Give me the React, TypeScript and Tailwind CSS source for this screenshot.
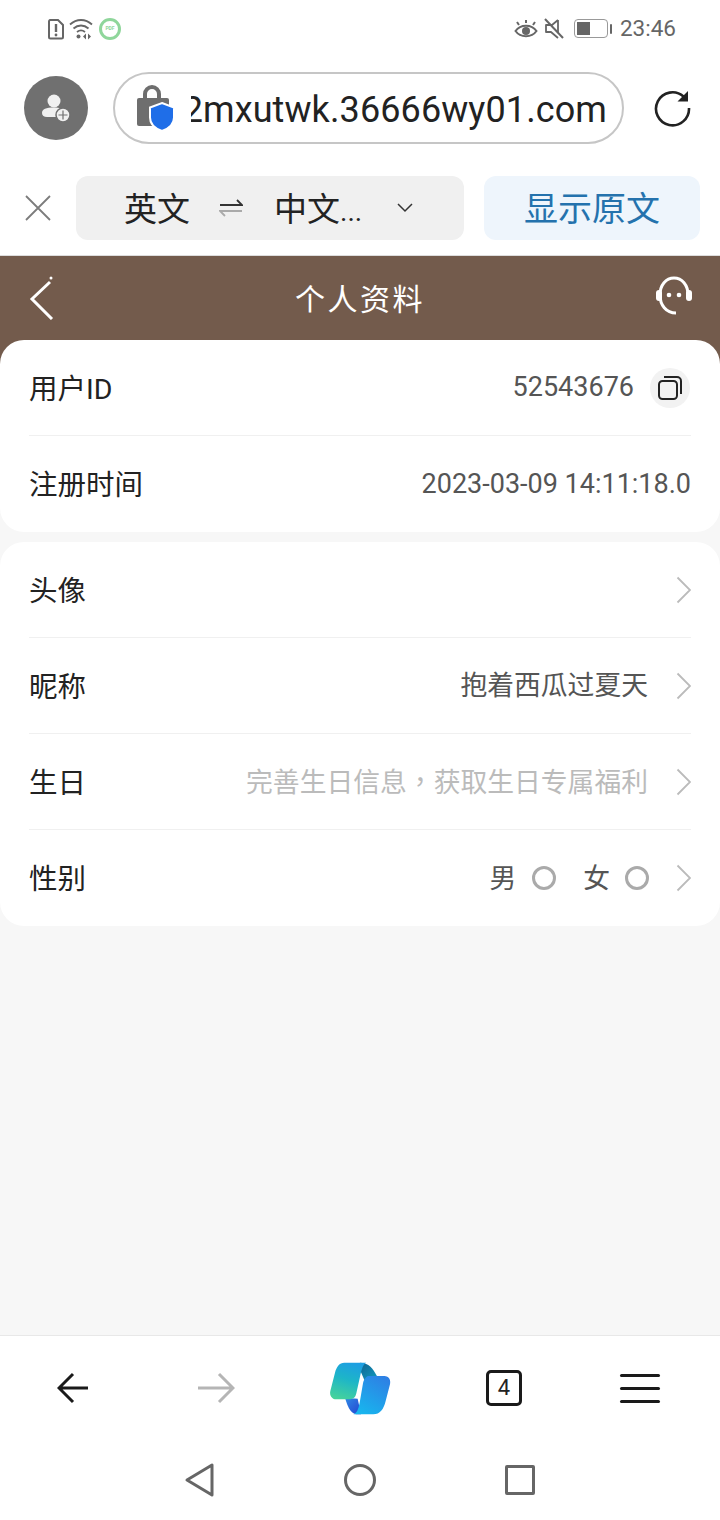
const font = { sans: "font-['Roboto','Noto_Sans_CJK_SC',sans-serif]" }

function StatusBar() {
    return (
        <div className="flex h-[60px] items-center justify-between pl-[47px] pr-[44px] text-[#666]">
            <div className="flex items-center gap-[5px] -mt-[3px]">
                {/* sim alert */}
                <svg width="18" height="22" viewBox="0 0 18 22" fill="none">
                    <path d="M3 2h8l5 5v12a1.500 1.500 0 0 1-1.500 1.500h-11A1.500 1.500 0 0 1 2 19V3.500A1.500 1.500 0 0 1 3 2z" stroke="#666" strokeWidth="2" />
                    <path d="M9 6v8" stroke="#666" strokeWidth="2.400" />
                    <circle cx="9" cy="17" r="1.400" fill="#666" />
                </svg>
                {/* wifi */}
                <svg width="25" height="22" viewBox="0 0 25 22" fill="none" className="-ml-[1px]">
                    <path d="M1 6.500c6.500-6 15.500-6 22 0M4.500 10.500c4.500-4 10.500-4 15 0M8 14c2.500-2 5.500-2 8 0" stroke="#666" strokeWidth="1.800" />
                    <circle cx="9.500" cy="18.500" r="2" fill="#666" />
                    <path d="M17 15.500l-3 3 3 3zM19 15.500l3 3-3 3z" fill="#666" />
                </svg>
                {/* green chat badge */}
                <div className="flex h-[22px] w-[22px] items-center justify-center rounded-full border-[3px] border-[#8fd69b] bg-white">
                    <span className="font-['Roboto',sans-serif] text-[5px] font-bold leading-none text-[#8fd69b]">PDF</span>
                </div>
            </div>
            <div className="flex items-center -mt-[3px]">
                {/* eye */}
                <svg width="24" height="22" viewBox="0 0 24 22" fill="none" className="mr-[6px]">
                    <path d="M1.500 13c5-7 16-7 21 0-5 7-16 7-21 0z" stroke="#666" strokeWidth="2" />
                    <circle cx="12" cy="13" r="4" fill="#666" />
                    <path d="M5 7L3 4M12 5V2M19 7l2-3" stroke="#666" strokeWidth="2" />
                </svg>
                {/* muted speaker */}
                <svg width="20" height="22" viewBox="0 0 20 22" fill="none" className="mr-[10px]">
                    <path d="M14 2v13M14 2L8 7H2v7h5l7 6" stroke="#666" strokeWidth="1.800" strokeLinejoin="round" />
                    <path d="M1 1l18 19" stroke="#666" strokeWidth="2" />
                </svg>
                {/* battery */}
                <div className="flex h-[19px] w-[34px] items-center rounded-[4px] border border-[#999] pl-[2px]">
                    <div className="h-[13px] w-[13px] bg-[#666]" />
                </div>
                <div className="ml-[2px] h-[10px] w-[2px] rounded-sm bg-[#666]" />
                <span className={`${font.sans} ml-[8px] text-[22.500px] leading-none`}>23:46</span>
            </div>
        </div>
    )
}

function AddressBar() {
    return (
        <div className="flex h-[96px] items-center pl-[24px]">
            <div className="flex h-[64px] w-[64px] items-center justify-center rounded-full bg-[#707070]">
                <svg width="32" height="32" viewBox="0 0 32 32" fill="none">
                    <circle cx="14" cy="9" r="6.500" fill="#f0f0f0" />
                    <path d="M2 21c0-4 4-5.500 12-5.500 3 0 5 .2 6.500 1-2.500 1.500-4 4-3.500 8.500H7c-3 0-5-1.500-5-4z" fill="#f0f0f0" />
                    <circle cx="23" cy="23" r="7" fill="#f0f0f0" stroke="#707070" strokeWidth="1.500" />
                    <path d="M23 18.500v9M18.500 23h9" stroke="#707070" strokeWidth="1.200" />
                </svg>
            </div>
            <div className="ml-[25px] flex h-[72px] w-[511px] items-center rounded-full border-2 border-[#c6c6c6] pl-[21px] pr-[15px]">
                <svg width="38" height="46" viewBox="0 0 38 46" fill="none" className="shrink-0">
                    <path d="M9 14V9a7 7 0 0 1 14 0v5" stroke="#6e6e6e" strokeWidth="4" />
                    <rect x="1" y="13" width="32" height="28" rx="2" fill="#6e6e6e" />
                    <path d="M26 18l12 4.500v10c0 7-5 11-12 13.500-7-2.500-12-6.500-12-13.500v-10z" fill="#1f6ee8" stroke="#fff" strokeWidth="2" />
                </svg>
                {/* long hosts scroll under the lock, so only the tail stays visible */}
                <div className="ml-[17px] flex min-w-0 flex-1 justify-end overflow-hidden">
                    <span className="whitespace-nowrap pt-[4px] font-['Roboto',sans-serif] text-[36px] leading-[44px] tracking-[0.1px] text-[#222]">
                        2mxutwk.36666wy01.com
                    </span>
                </div>
            </div>
            {/* reload */}
            <svg width="40" height="40" viewBox="0 0 40 40" fill="none" className="ml-[29px]">
                <path d="M30.500 8.500A16.500 16.500 0 1 0 36 20" stroke="#222" strokeWidth="2.600" />
                <path d="M35 3v10.500H24.500z" fill="#222" />
            </svg>
        </div>
    )
}

function TranslateBar() {
    return (
        <div className={`${font.sans} flex h-[100px] items-center border-b border-[#ddd] pl-[25px] pr-[20px] pt-[4px]`}>
            <svg width="26" height="26" viewBox="0 0 26 26" fill="none">
                <path d="M1 1l24 24M25 1L1 25" stroke="#7c7c7c" strokeWidth="1.800" />
            </svg>
            <div className="ml-[25px] flex h-[64px] w-[388px] items-center rounded-[12px] bg-[#f0f0f0] text-[33px] text-[#222]">
                <span className="ml-[48px] pt-[4px]">英文</span>
                <svg width="24" height="20" viewBox="0 0 24 20" fill="none" className="ml-[29px]">
                    <path d="M1 7h22L18 2" stroke="#333" strokeWidth="1.800" />
                    <path d="M23 13H1l5 5" stroke="#aaa" strokeWidth="1.800" />
                </svg>
                <span className="ml-[31px] pt-[4px]">
                    中文<span className="text-[28px]">...</span>
                </span>
                <svg width="16" height="10" viewBox="0 0 16 10" fill="none" className="ml-[35px]">
                    <path d="M1 1l7 7 7-7" stroke="#333" strokeWidth="1.500" />
                </svg>
            </div>
            <div className="ml-[20px] flex h-[64px] w-[216px] items-center justify-center rounded-[12px] bg-[#eef5fc] pt-[4px] text-[34px] text-[#2472ad]">
                显示原文
            </div>
        </div>
    )
}

function Row({ label, last, children }: { label: string; last?: boolean; children?: React.ReactNode }) {
    return (
        <div className={`mx-[29px] flex h-[96px] items-center justify-between ${last ? '' : 'border-b border-[#f0f0f0]'}`}>
            <span className="pt-[5px] text-[28.500px] text-[#222]">{label}</span>
            <div className="flex items-center">{children}</div>
        </div>
    )
}

function Chevron() {
    return (
        <svg width="15" height="28" viewBox="0 0 15 28" fill="none" className="ml-[28px]">
            <path d="M1.500 1.500L14 14 1.500 26.500" stroke="#bbb" strokeWidth="1.800" />
        </svg>
    )
}

// two folded ribbons with a white slit between them
function CopilotLogo() {
    return (
        <svg width="70" height="65" viewBox="0 0 210 195" fill="none">
            <defs>
                <linearGradient id="wingLeft" x1="0.3" y1="1" x2="0.6" y2="0">
                    <stop offset="0" stopColor="#45d29c" />
                    <stop offset="0.550" stopColor="#1db5c8" />
                    <stop offset="1" stopColor="#1d9fe2" />
                </linearGradient>
                <linearGradient id="wingRight" x1="0.2" y1="1" x2="0.8" y2="0">
                    <stop offset="0" stopColor="#17b7ee" />
                    <stop offset="1" stopColor="#2e80e4" />
                </linearGradient>
                <linearGradient id="foldTop" x1="0" y1="0" x2="1" y2="1">
                    <stop offset="0" stopColor="#0e5f8e" />
                    <stop offset="1" stopColor="#139cc0" />
                </linearGradient>
                <linearGradient id="foldBottom" x1="0" y1="0" x2="1" y2="1">
                    <stop offset="0" stopColor="#2f8ae6" />
                    <stop offset="1" stopColor="#2444d0" />
                </linearGradient>
            </defs>
            <path d="M105 20c20 0 35 10 45 30l8 14-40 8-18-42z" fill="url(#foldTop)" />
            <path d="M60 125l38 3 10 47h-8c-20 0-30-15-40-50z" fill="url(#foldBottom)" />
            <path d="M58 20h66c-10 4-14 20-18 38l-12 54c-3 14-10 18-24 18H34c-14 0-21-12-18-25l14-55c5-18 13-30 28-30z" fill="url(#wingLeft)" />
            <path d="M130 60h48c14 0 20 12 17 25l-13 50c-6 25-17 40-37 40H84c12-3 16-15 20-35l10-58c2-10 8-20 16-22z" fill="url(#wingRight)" />
        </svg>
    )
}

export default function App() {
    return (
        <div className={`${font.sans} flex h-[1520px] w-[720px] flex-col overflow-hidden bg-[#f7f7f7]`}>
            <div className="bg-white">
                <StatusBar />
                <AddressBar />
                <TranslateBar />
            </div>

            {/* page header, runs on behind the rounded card corners */}
            <div className="flex h-[108px] items-start justify-between bg-[#735b4c] pl-[29px] pr-[27px] pt-[20px]">
                <div className="w-[36px]">
                    <svg width="28" height="44" viewBox="0 0 28 44" fill="none">
                        <path d="M21 6L3 23l20 20" stroke="#fff" strokeWidth="3" />
                        <circle cx="22" cy="2" r="1.500" fill="#fff" />
                    </svg>
                </div>
                <span className="mt-[2px] text-[30px] leading-[44px] tracking-[2.500px] text-white">个人资料</span>
                <svg width="38" height="40" viewBox="0 0 38 40" fill="none">
                    <path d="M5 19C5 9 11 2 19 2s14 7 14 17M5 19c0 10 6 18 16 18" stroke="#fff" strokeWidth="3" />
                    <rect x="1" y="14" width="6" height="11" rx="3" fill="#fff" />
                    <rect x="31" y="14" width="6" height="11" rx="3" fill="#fff" />
                    <circle cx="14" cy="19" r="2.300" fill="#fff" />
                    <circle cx="24" cy="19" r="2.300" fill="#fff" />
                </svg>
            </div>

            <div className="-mt-[24px] rounded-[24px] bg-white">
                <Row label="用户ID">
                    <span className="text-[27px] text-[#555]">52543676</span>
                    <div className="ml-[16px] mr-[1px] flex h-[40px] w-[40px] items-center justify-center rounded-full bg-[#f2f2f2]">
                        <svg width="26" height="26" viewBox="0 0 26 26" fill="none">
                            <rect x="2" y="6" width="18" height="18" rx="3.500" stroke="#222" strokeWidth="2" />
                            <path d="M7 2h13a4 4 0 0 1 4 4v13" stroke="#222" strokeWidth="2" />
                        </svg>
                    </div>
                </Row>
                <Row label="注册时间" last>
                    <span className="pt-[1px] text-[27px] text-[#555]">2023-03-09 14:11:18.0</span>
                </Row>
            </div>

            <div className="mt-[10px] rounded-[24px] bg-white">
                <Row label="头像">
                    <Chevron />
                </Row>
                <Row label="昵称">
                    <span className="pt-[2px] text-[26.800px] text-[#555]">抱着西瓜过夏天</span>
                    <Chevron />
                </Row>
                <Row label="生日">
                    <span className="pt-[2px] text-[26.800px] text-[#bbb]">
                        完善生日信息<span className="font-['Noto_Sans_CJK_TC',sans-serif]">，</span>获取生日专属福利
                    </span>
                    <Chevron />
                </Row>
                <Row label="性别" last>
                    <span className="pt-[2px] text-[26.800px] text-[#555]">男</span>
                    <div className="ml-[16px] h-[24px] w-[24px] rounded-full border-[3px] border-[#aaa]" />
                    <span className="ml-[27px] pt-[2px] text-[26.800px] text-[#555]">女</span>
                    <div className="ml-[15px] -mr-[1px] h-[24px] w-[24px] rounded-full border-[3px] border-[#aaa]" />
                    <Chevron />
                </Row>
            </div>

            <div className="mt-auto h-[185px] border-t border-[#e8e8e8] bg-white">
                {/* browser toolbar */}
                <div className="flex h-[104px] items-center pl-[57px]">
                    <svg width="32" height="32" viewBox="0 0 32 32" fill="none">
                        <path d="M31 16H2M16 2L2 16l14 14" stroke="#1a1a1a" strokeWidth="3" />
                    </svg>
                    <svg width="37" height="32" viewBox="0 0 37 32" fill="none" className="ml-[109px]">
                        <path d="M0 16h35M21 2l14 14-14 14" stroke="#b5b5b5" strokeWidth="3" />
                    </svg>
                    <div className="ml-[90px]">
                        <CopilotLogo />
                    </div>
                    <div className="ml-[91px] flex h-[36px] w-[36px] items-center justify-center rounded-[5px] border-[3px] border-[#1a1a1a] font-['Roboto',sans-serif] text-[22px] leading-none text-[#222]">
                        4
                    </div>
                    <div className="ml-[98px] flex w-[40px] flex-col gap-[10px]">
                        <div className="h-[3px] rounded-full bg-[#1a1a1a]" />
                        <div className="h-[3px] rounded-full bg-[#1a1a1a]" />
                        <div className="h-[3px] rounded-full bg-[#1a1a1a]" />
                    </div>
                </div>

                {/* system nav */}
                <div className="flex items-center justify-center gap-[129px] pt-[22px]">
                    <svg width="31" height="36" viewBox="0 0 31 36" fill="none" className="-ml-[1px]">
                        <path d="M28 3v30L3 18z" stroke="#666" strokeWidth="3" strokeLinejoin="round" />
                    </svg>
                    <div className="h-[32px] w-[32px] rounded-full border-[3px] border-[#666]" />
                    <div className="h-[30px] w-[30px] rounded-[2px] border-[3px] border-[#666]" />
                </div>
            </div>
        </div>
    )
}
